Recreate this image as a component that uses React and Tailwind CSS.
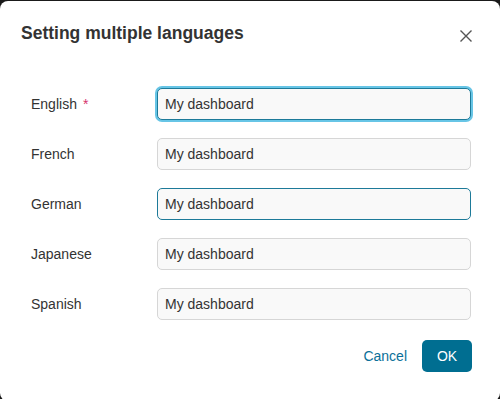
import React, { useState } from 'react';

const languages = [
	{ name: 'English', required: true, state: 'focus' },
	{ name: 'French', state: 'idle' },
	{ name: 'German', state: 'active' },
	{ name: 'Japanese', state: 'idle' },
	{ name: 'Spanish', state: 'idle' },
];

const inputClass = {
	focus: 'border-[#1d7a99] ring-2 ring-[#67c5e6]',
	active: 'border-[#1d7a99]',
	idle: 'border-[#d6d6d6]',
};

export default function App() {
	const [values, setValues] = useState(languages.map(() => 'My dashboard'));

	return (
		<div className="w-[500px] h-[399px] bg-[#1a1a1a] pt-px font-['Liberation_Sans',Arial,sans-serif]">
			<div className="h-[400px] bg-white rounded-lg flex flex-col">
				<div className="flex items-start justify-between pl-[21px] pr-[27px] pt-[20px]">
					<h2 className="text-[17.5px] font-bold text-[#333] leading-[24px]">Setting multiple languages</h2>
					<button className="mt-[8px] text-[#555]">
						<svg width="14" height="14" viewBox="0 0 14 14" fill="none" stroke="currentColor" strokeWidth="1.4">
							<path d="M1.5 1.5l11 11M12.5 1.5l-11 11" />
						</svg>
					</button>
				</div>

				<div className="flex flex-col gap-[18px] pl-[31px] pr-[29px] pt-[43px]">
					{languages.map((lang, i) => (
						<div key={lang.name} className="flex items-center h-[32px]">
							<label className="w-[126px] text-[14px] text-[#333]">
								{lang.name}
								{lang.required && <span className="ml-[6px] text-[#d6336c]">*</span>}
							</label>
							<input
								value={values[i]}
								onChange={(e) => {
									const next = [...values];
									next[i] = e.target.value;
									setValues(next);
								}}
								className={`flex-1 h-[32px] px-[7px] text-[14px] text-[#333] bg-[#f9f9f9] border rounded-[5px] outline-none ${inputClass[lang.state]}`}
							/>
						</div>
					))}
				</div>

				<div className="flex justify-end items-center gap-[15px] pr-[28px] pt-[20px]">
					<button className="text-[14px] text-[#0a7099] px-[0px]">Cancel</button>
					<button className="h-[32px] w-[50px] rounded-[5px] bg-[#006e91] text-white text-[14px]">OK</button>
				</div>
			</div>
		</div>
	);
}
